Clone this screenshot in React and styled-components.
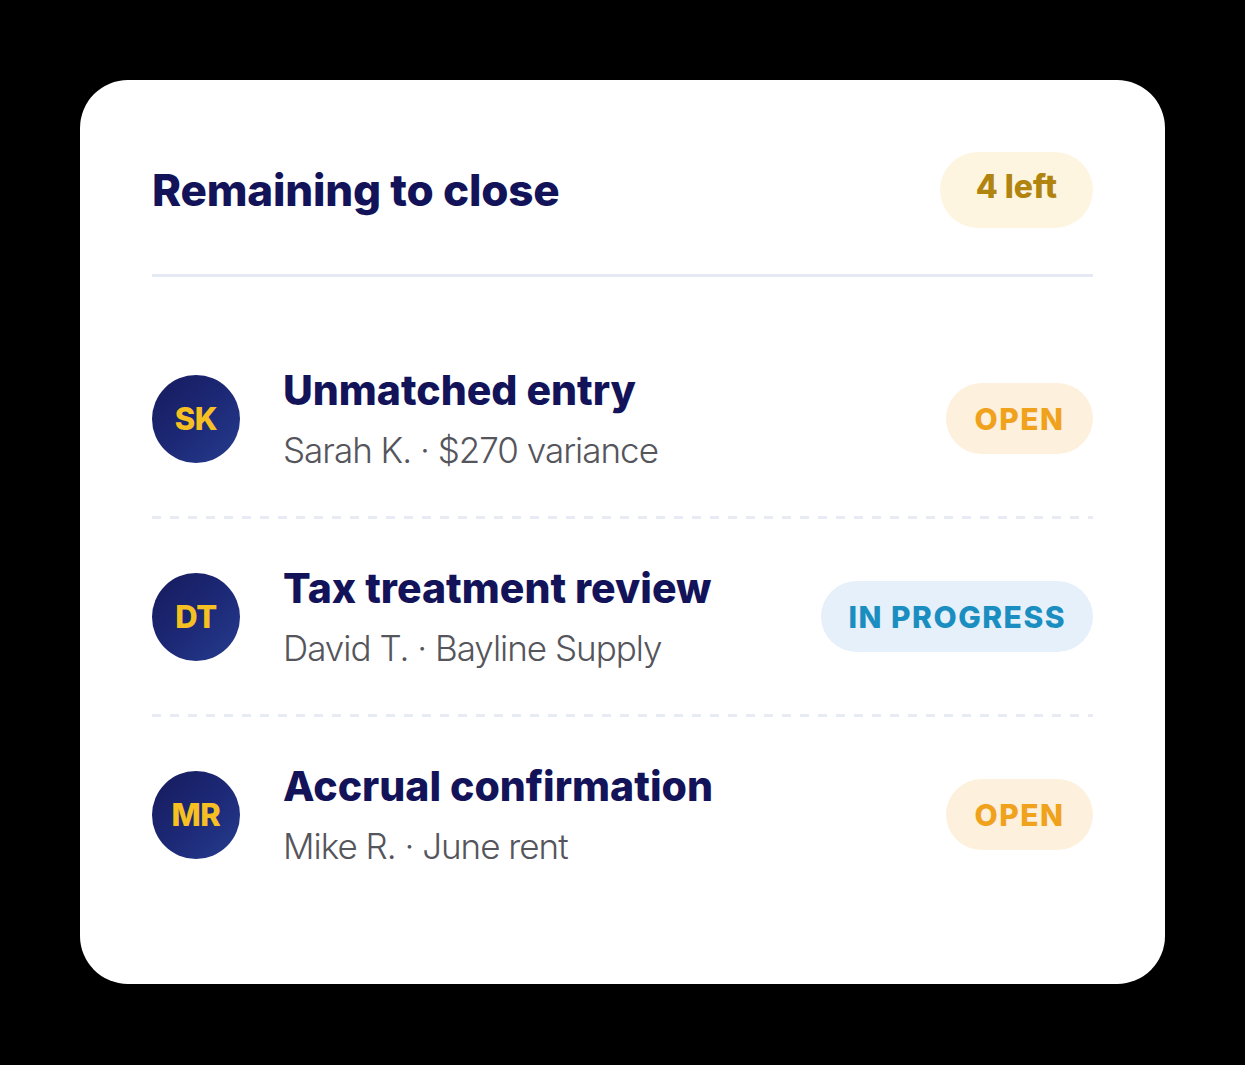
import React from 'react'
import styled, { createGlobalStyle } from 'styled-components'

const GlobalStyle = createGlobalStyle`
  html, body {
    margin: 0;
    padding: 0;
    background: #000;
  }
  body {
    font-family: Inter, "Noto Sans", sans-serif;
  }
`

const Page = styled.div`
  width: 1245px;
  height: 1065px;
  background: #000;
  padding: 80px;
  box-sizing: border-box;
`

const Card = styled.div`
  width: 1085px;
  height: 904px;
  box-sizing: border-box;
  background: #fff;
  border-radius: 48px;
  padding: 72px 72px 70px 72px;
  display: flex;
  flex-direction: column;
`

const Header = styled.div`
  display: flex;
  align-items: center;
  justify-content: space-between;
  padding-bottom: 46px;
  border-bottom: 3px solid #e5e9f3;
`

const Title = styled.h2`
  margin: 0;
  font-size: 44px;
  font-weight: 800;
  color: #13135a;
  letter-spacing: -0.2px;
`

const CountBadge = styled.span`
  display: inline-flex;
  align-items: center;
  justify-content: center;
  height: 76px;
  box-sizing: border-box;
  padding: 0 36px 8px;
  border-radius: 38px;
  background: #fdf5e0;
  color: #b0840f;
  font-size: 32px;
  font-weight: 800;
`

const List = styled.div`
  margin-top: 44px;
  display: flex;
  flex-direction: column;
`

const Row = styled.div`
  display: flex;
  align-items: center;
  height: 198px;
  box-sizing: border-box;
  padding-bottom: 3px;
  background-image: ${p =>
    p.$last ? 'none' : 'linear-gradient(to right, #e8ebf3 0 9px, transparent 9px 18px)'};
  background-size: 18px 3px;
  background-repeat: repeat-x;
  background-position: left bottom;
`

const Avatar = styled.div`
  width: 88px;
  height: 88px;
  border-radius: 50%;
  flex-shrink: 0;
  background: linear-gradient(135deg, #161a5c 0%, #1d2a78 55%, #263c8e 100%);
  color: #f6c023;
  font-size: 31px;
  font-weight: 800;
  display: flex;
  align-items: center;
  justify-content: center;
  letter-spacing: -0.5px;
`

const Info = styled.div`
  flex: 1;
  margin-left: 43px;
  display: flex;
  flex-direction: column;
  gap: 16px;
`

const ItemTitle = styled.div`
  font-size: 41px;
  font-weight: 800;
  color: #13135a;
  line-height: 46px;
`

const ItemMeta = styled.div`
  font-size: 35px;
  font-weight: 300;
  color: #55555c;
  line-height: 42px;
  letter-spacing: -1px;
`

const StatusPill = styled.span`
  display: inline-flex;
  align-items: center;
  justify-content: center;
  min-width: 147px;
  box-sizing: border-box;
  height: 71px;
  padding: 0 27px;
  border-radius: 36px;
  font-size: 30px;
  font-weight: 800;
  letter-spacing: 1.5px;
  background: ${p => (p.$kind === 'progress' ? '#e6f0fa' : '#fdf0dc')};
  color: ${p => (p.$kind === 'progress' ? '#1a8ec0' : '#f0a21c')};
`

const items = [
  { initials: 'SK', title: 'Unmatched entry', meta: 'Sarah K. · $270 variance', status: 'OPEN', kind: 'open' },
  { initials: 'DT', title: 'Tax treatment review', meta: 'David T. · Bayline Supply', status: 'IN PROGRESS', kind: 'progress' },
  { initials: 'MR', title: 'Accrual confirmation', meta: 'Mike R. · June rent', status: 'OPEN', kind: 'open' },
]

export default function App() {
  return (
    <Page>
      <GlobalStyle />
      <Card>
        <Header>
          <Title>Remaining to close</Title>
          <CountBadge>4 left</CountBadge>
        </Header>
        <List>
          {items.map((item, index) => (
            <Row key={index} $last={index === items.length - 1}>
              <Avatar>{item.initials}</Avatar>
              <Info>
                <ItemTitle>{item.title}</ItemTitle>
                <ItemMeta>{item.meta}</ItemMeta>
              </Info>
              <StatusPill $kind={item.kind}>{item.status}</StatusPill>
            </Row>
          ))}
        </List>
      </Card>
    </Page>
  )
}
